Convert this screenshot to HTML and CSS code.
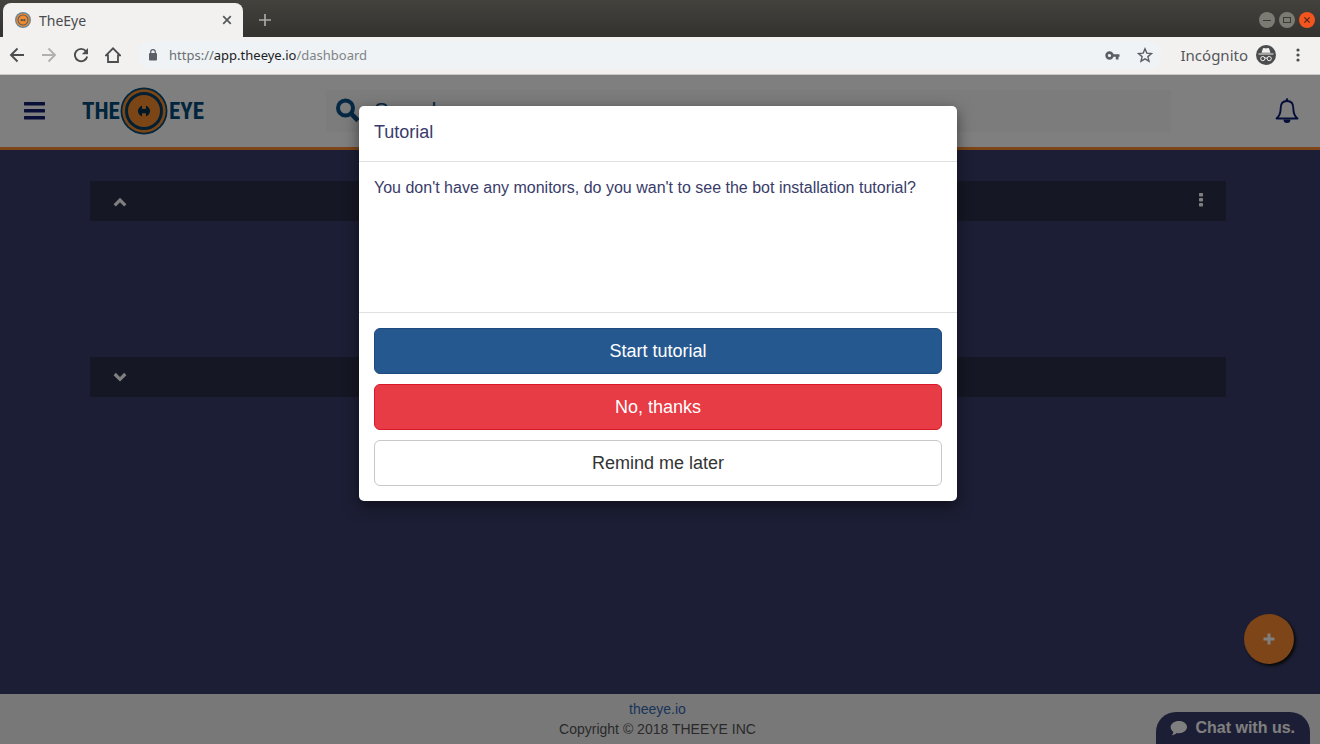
FILE: index.html
```html
<!DOCTYPE html>
<html lang="en">
<head>
<meta charset="utf-8">
<title>TheEye</title>
<link rel="stylesheet" href="styles.css">
</head>
<body>
<header class="browser">
  <div class="tabstrip">
    <div class="tab">
      <svg class="favicon" viewBox="0 0 16 16" width="16" height="16"><circle cx="8" cy="8" r="8" fill="#6d8796"/><circle cx="8" cy="8" r="6.6" fill="#f58a2c"/><circle cx="8" cy="8" r="5" fill="none" stroke="#5a5f62" stroke-width="1.1"/><path d="M5.8 6.8l1.2.6h2l1.2-.6v2.6L9 8.8H7l-1.2.6z" fill="#2d5069"/></svg>
      <span class="tab-title">TheEye</span>
      <button class="plain" aria-label="Close tab"><svg viewBox="0 0 10 10" width="10" height="10"><path d="M1.2 1.2l7.6 7.6M8.8 1.2L1.2 8.8" stroke="#55585a" stroke-width="1.7"/></svg></button>
    </div>
    <button class="plain new-tab" aria-label="New tab"><svg viewBox="0 0 12 12" width="12" height="12"><path d="M6 0v12M0 6h12" stroke="#a9a9a7" stroke-width="1.7"/></svg></button>
    <div class="window-buttons">
      <button class="plain" aria-label="Minimize"><svg viewBox="0 0 16 16" width="16" height="16"><circle cx="8" cy="8" r="8" fill="#7c7b73"/><path d="M4 8.5h8" stroke="#3b3a36"/></svg></button>
      <button class="plain" aria-label="Maximize"><svg viewBox="0 0 16 16" width="16" height="16"><circle cx="8" cy="8" r="8" fill="#7c7b73"/><rect x="4.500" y="5.500" width="7" height="5" fill="none" stroke="#3b3a36"/></svg></button>
      <button class="plain" aria-label="Close window"><svg viewBox="0 0 16 16" width="16" height="16"><circle cx="8" cy="8" r="8" fill="#f4541d"/><path d="M5.300 5.300l5.400 5.400M10.700 5.300l-5.400 5.400" stroke="#4c2a18" stroke-width="1.200"/></svg></button>
    </div>
  </div>
  <div class="toolbar">
    <div class="nav">
      <button class="plain" aria-label="Back"><svg viewBox="0 0 16 16" width="16" height="16" fill="none" stroke="#4c4d4f" stroke-width="1.900"><path d="M15 8H2M8.500 1.500L2 8l6.500 6.500"/></svg></button>
      <button class="plain" aria-label="Forward"><svg viewBox="0 0 16 16" width="16" height="16" fill="none" stroke="#b0b0af" stroke-width="1.900"><path d="M1 8h13M7.500 1.500L14 8l-6.500 6.500"/></svg></button>
      <button class="plain" aria-label="Reload"><svg viewBox="0 0 16 16" width="16" height="16"><path d="M13 4.200A6.200 6.200 0 1 0 14.200 9.500" fill="none" stroke="#4c4d4f" stroke-width="1.900"/><path d="M15 1v6.200H8.800z" fill="#4c4d4f"/></svg></button>
      <button class="plain" aria-label="Home"><svg viewBox="0 0 16 16" width="16" height="16"><path d="M1 8.300L8 1.300l7 7h-2V15H3V8.300z" fill="none" stroke="#4c4d4f" stroke-width="1.800"/></svg></button>
    </div>
    <div class="address">
      <svg viewBox="0 0 8 12" width="8" height="12"><path d="M1.700 5V3a2.300 2.300 0 0 1 4.600 0v2" fill="none" stroke="#5c6066" stroke-width="1.200"/><rect y="4" width="8" height="7.500" rx="1" fill="#5c6066"/></svg>
      <span class="url">https://<span class="host">app.theeye.io</span><span class="path">/dashboard</span></span>
      <button class="plain key" aria-label="Passwords"><svg viewBox="0 0 15 9" width="15" height="9"><circle cx="4.500" cy="4.500" r="2.900" fill="none" stroke="#5c6066" stroke-width="2.600"/><path d="M7.500 3.200H14.500V5.800H13.500V8.500H10.800V5.800H7.500z" fill="#5c6066"/></svg></button>
      <button class="plain" aria-label="Bookmark"><svg viewBox="0 0 16 16" width="16" height="16"><path d="M8 1.800l1.800 4.300 4.700.4-3.600 3.100 1.100 4.600L8 11.800l-4 2.400 1.100-4.600L1.500 6.500l4.700-.4z" fill="none" stroke="#5c6066" stroke-width="1.400"/></svg></button>
    </div>
    <span class="incognito">Incógnito</span>
    <svg class="spy" viewBox="0 0 20 20" width="20" height="20"><circle cx="10" cy="10" r="10" fill="#4b4c4d"/><path d="M2.500 9.500V8.500h15v1zM5.500 7.700L7 3.300q1.300-.5 3 .3 1.700-.8 3-.3l1.500 4.400z" fill="#f2f1f0"/><circle cx="6.800" cy="13.600" r="2.100" fill="none" stroke="#f2f1f0"/><circle cx="13.200" cy="13.600" r="2.100" fill="none" stroke="#f2f1f0"/><path d="M8.800 13.300q1.200-.8 2.400 0" fill="none" stroke="#f2f1f0"/></svg>
    <button class="plain more" aria-label="Menu"><svg viewBox="0 0 4 14" width="4" height="14" fill="#4c4d4f"><circle cx="2" cy="2" r="1.600"/><circle cx="2" cy="7" r="1.600"/><circle cx="2" cy="12" r="1.600"/></svg></button>
  </div>
</header>

<div class="page">
  <header class="site-header">
    <button class="plain" aria-label="Navigation"><svg viewBox="0 0 21 18" width="21" height="18" fill="#131e6e"><rect y="0" width="21" height="3.400" rx=".6"/><rect y="7" width="21" height="3.400" rx=".6"/><rect y="14" width="21" height="3.400" rx=".6"/></svg></button>
    <a class="logo" href="#"><span>THE</span><svg viewBox="0 0 48 48" width="48" height="48"><circle cx="24" cy="24" r="23.500" fill="#034a78"/><circle cx="24" cy="24" r="21.700" fill="#f78b2d"/><circle cx="24" cy="24" r="17.500" fill="none" stroke="#034068" stroke-width="3"/><path d="M17.800 24Q18.500 20 22 18.500V21.500Q24 22.600 26 21.500V18.500Q29.500 20 30.200 24 29.500 28 26 29.500V26.500Q24 25.400 22 26.500V29.500Q18.500 28 17.800 24z" fill="#023050"/></svg><span>EYE</span></a>
    <label class="search">
      <svg viewBox="0 0 24 26" width="24" height="26" fill="none" stroke="#0a528a" stroke-width="4"><circle cx="10.500" cy="10" r="7.500"/><path d="M16 15.500l7 7" stroke-width="4.600"/></svg>
      <input type="text" placeholder="Search" aria-label="Search">
    </label>
    <button class="plain" aria-label="Notifications"><svg viewBox="0 0 24 26" width="24" height="26"><path d="M12 3C7.500 3 5.700 6.200 5.700 10c0 5.500-1.700 8.500-4.200 10.500h21C20 18.500 18.300 15.500 18.300 10 18.300 6.200 16.500 3 12 3z" fill="none" stroke="#0b1c70" stroke-width="1.900" stroke-linejoin="round"/><path d="M10.800 3V1.500a1.200 1.200 0 0 1 2.400 0V3zM8.500 21.500h7a3.500 3.500 0 0 1-7 0z" fill="#0b1c70"/></svg></button>
  </header>

  <main class="board">
    <section class="panel">
      <button class="plain" aria-label="Collapse"><svg viewBox="0 0 14 14" width="14" height="14"><path d="M1.700 11.300L7 6l5.300 5.300" fill="none" stroke="#fff" stroke-width="3.200"/></svg></button>
      <button class="plain" aria-label="Options"><svg viewBox="0 0 4 16" width="4" height="16" fill="#fff"><rect width="4" height="3.500" rx=".8"/><rect y="5" width="4" height="3.500" rx=".8"/><rect y="10" width="4" height="3.500" rx=".8"/></svg></button>
    </section>
    <section class="panel">
      <button class="plain" aria-label="Expand"><svg viewBox="0 0 14 14" width="14" height="14"><path d="M1.700 4l5.300 5.300L12.300 4" fill="none" stroke="#fff" stroke-width="3.200"/></svg></button>
    </section>
    <button class="add" aria-label="Add"><svg viewBox="0 0 12 12" width="12" height="12"><path d="M6 .5v11M.5 6h11" stroke="#fff" stroke-width="3"/></svg></button>
  </main>

  <footer class="site-footer">
    <a href="#">theeye.io</a>
    <span>Copyright © 2018 THEEYE INC</span>
  </footer>
  <button class="chat"><svg viewBox="0 0 17 15" width="17" height="15"><path d="M9 0c4.500 0 8 2.700 8 6s-3.500 6.200-8 6.200c-.8 0-1.600-.1-2.300-.3C5.300 13.200 3.500 14 1.800 14.200c.9-.9 1.500-2 1.500-3.500C1.600 9.600.6 7.900.6 6.100.6 2.700 4.500 0 9 0z" fill="#fff"/></svg>Chat with us.</button>

  <div class="backdrop">
    <div class="dialog" role="dialog" aria-labelledby="dialog-title">
      <h1 class="dialog-title" id="dialog-title">Tutorial</h1>
      <p class="dialog-text">You don't have any monitors, do you wan't to see the bot installation tutorial?</p>
      <div class="dialog-actions">
        <button class="btn primary">Start tutorial</button>
        <button class="btn danger">No, thanks</button>
        <button class="btn">Remind me later</button>
      </div>
    </div>
  </div>
</div>
</body>
</html>
```
FILE: styles.css
```css
* { box-sizing: border-box; }
body {
  margin: 0;
  min-height: 100vh;
  display: flex;
  flex-direction: column;
  font-family: "Liberation Sans", Arial, sans-serif;
  font-size: 14px;
}
svg { display: block; flex: none; }
button, input { font: inherit; }
.plain { border: 0; padding: 0; background: none; }

/* Browser window */
.browser {
  font-family: "Noto Sans", "Open Sans", sans-serif;
  color: #5b5d60;
  border-bottom: 1px solid #c9c8c7;
}
.tabstrip {
  display: flex;
  align-items: center;
  height: 37px;
  padding: 3px 5px 0 3px;
  background: linear-gradient(#43423d, #33322f);
}
.tab {
  display: flex;
  align-items: center;
  align-self: stretch;
  gap: 8px;
  width: 240px;
  padding: 0 11px 0 12px;
  border-radius: 8px 8px 0 0;
  background: #f2f1f0;
}
.tab-title { flex: 1; color: #4a4b4d; }
.new-tab { margin-left: 16px; }
.window-buttons { display: flex; gap: 4px; margin-left: auto; }
.toolbar {
  display: flex;
  align-items: center;
  height: 37px;
  padding: 0 20px 1px 9px;
  background: #f2f1f0;
}
.nav { display: flex; gap: 16px; }
.address {
  display: flex;
  flex: 1;
  align-items: center;
  height: 28px;
  margin: 0 19px 0 16px;
  padding: 0 9px 0 12px;
  border-radius: 14px;
  background: #eff3f5;
}
.url { flex: 1; padding-left: 12px; color: #6b6e72; font-size: 13px; }
.host { color: #202124; }
.path { color: #808387; }
.key { margin-right: 17px; }
.incognito { color: #55575b; font-size: 15px; }
.spy { margin-left: 8px; }
.more { margin-left: 20px; }

/* Application */
.page {
  position: relative;
  display: flex;
  flex: 1;
  flex-direction: column;
}
.site-header {
  display: flex;
  align-items: center;
  height: 75px;
  padding: 0 21px 0 24px;
  border-bottom: 3px solid #fb8b30;
  background: #fff;
}
.logo {
  display: flex;
  flex: none;
  align-items: center;
  justify-content: space-between;
  width: 122px;
  margin-left: 37px;
  color: #034a78;
  font-family: "Roboto Condensed", Roboto, sans-serif;
  font-size: 23px;
  font-weight: bold;
  text-decoration: none;
}
.search {
  display: flex;
  flex: 1;
  align-items: center;
  height: 42px;
  margin: 0 104px 0 122px;
  padding: 0 9px;
  background: #f8f8f8;
}
.search input {
  flex: 1;
  min-width: 0;
  margin-left: 15px;
  padding: 0;
  border: 0;
  background: none;
  font-size: 22px;
}
.search input::placeholder { color: #0a528a; }
.board {
  position: relative;
  flex: 1;
  padding: 31px 94px 0 90px;
  background: #393c6a;
}
.panel {
  display: flex;
  align-items: center;
  justify-content: space-between;
  height: 40px;
  margin-bottom: 136px;
  padding: 0 23px;
  background: #2a2f49;
}
.add {
  position: absolute;
  right: 26px;
  bottom: 30px;
  display: grid;
  place-items: center;
  width: 50px;
  height: 50px;
  padding: 0;
  border: 0;
  border-radius: 50%;
  background: #fb8b30;
  box-shadow: 2px 2px 3px #111;
}
.site-footer {
  display: flex;
  flex-direction: column;
  align-items: center;
  height: 50px;
  padding: 5px 5px 0 0;
  line-height: 20px;
  color: #555;
  background: #f0f0f0;
}
.site-footer a { color: #3468b4; text-decoration: none; }
.chat {
  position: absolute;
  right: 10px;
  bottom: 0;
  display: flex;
  align-items: center;
  gap: 8px;
  height: 32px;
  padding: 0 15px 0 14px;
  border: 0;
  border-radius: 20px 20px 0 0;
  background: #393c6a;
  color: #fff;
  font-size: 16px;
  font-weight: bold;
}

/* Tutorial dialog */
.backdrop {
  position: absolute;
  inset: 0;
  padding: 31px 4px 0 0;
  background: rgba(0, 0, 0, 0.5);
}
.dialog {
  max-width: 598px;
  margin: 0 auto;
  border-radius: 5px;
  background: #fff;
  color: #393c6a;
  box-shadow: 0 5px 15px rgba(0, 0, 0, 0.5);
}
.dialog-title {
  margin: 0;
  padding: 14px 15px 17px;
  border-bottom: 1px solid #e0e0e0;
  font-size: 18px;
  font-weight: normal;
  line-height: 24px;
}
.dialog-text {
  min-height: 150px;
  margin: 0;
  padding: 15px;
  font-size: 16px;
  line-height: 22px;
}
.dialog-actions {
  display: flex;
  flex-direction: column;
  gap: 10px;
  padding: 15px;
  border-top: 1px solid #e0e0e0;
}
.btn {
  height: 46px;
  border: 1px solid #c8c8c8;
  border-radius: 6px;
  background: #fff;
  color: #333;
  font-size: 18px;
}
.primary { border-color: #1e4a80; background: #265890; color: #fff; }
.danger { border-color: #d9182a; background: #e73b45; color: #fff; }
```
